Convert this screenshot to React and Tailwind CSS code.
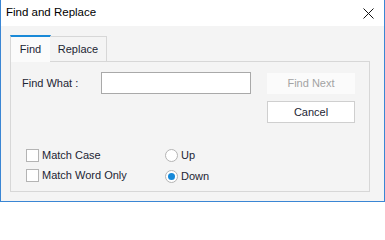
import React from "react";

const font = { fontFamily: '"Liberation Sans", Arial, sans-serif' };

function Checkbox({ label }) {
  return (
    <div className="flex items-center h-[13px]">
      <div className="w-[13px] h-[13px] border border-[#b4b4b4] bg-white shrink-0" />
      <span className="ml-[3px] text-[11px] leading-[13px] text-[#1c2533] whitespace-nowrap">{label}</span>
    </div>
  );
}

function Radio({ label, checked }) {
  return (
    <div className="flex items-center h-[13px]">
      <div className="w-[13px] h-[13px] rounded-full border border-[#b4b4b4] bg-white shrink-0 flex items-center justify-center">
        {checked && <div className="w-[7px] h-[7px] rounded-full bg-[#1689d9]" />}
      </div>
      <span className="ml-[3px] text-[11px] leading-[13px] text-[#1c2533] whitespace-nowrap">{label}</span>
    </div>
  );
}

export default function App() {
  return (
    <div
      className="w-[385px] h-[202px] flex flex-col border-x border-b border-[#3a86d4] bg-[#f4f4f4] overflow-hidden"
      style={font}
    >
      <div className="h-[26px] bg-white flex items-center justify-between pl-[5px] pr-[10px] shrink-0">
        <span className="text-[11.5px] text-black leading-none">Find and Replace</span>
        <svg width="11" height="11" viewBox="0 0 11 11" className="block">
          <path d="M0.5 0.5 L10.5 10.5 M10.5 0.5 L0.5 10.5" stroke="#111" strokeWidth="1" />
        </svg>
      </div>
      <div className="flex-1 pl-[9px] pt-[9px]">
        <div className="flex items-end h-[27px] relative z-10">
          <div className="w-[41px] h-[27px] border-t-2 border-t-[#1a8ad8] border-x border-x-[#d7d7d7] bg-[#fbfbfb] flex items-center justify-center">
            <span className="text-[11px] text-[#1c2533] leading-none pb-[1px]">Find</span>
          </div>
          <div className="w-[57px] h-[25px] border-t border-r border-[#d7d7d7] bg-[#f4f4f4] flex items-center justify-center -ml-[1px] mb-[1px]">
            <span className="text-[11px] text-[#1c2533] leading-none pt-[1px]">Replace</span>
          </div>
        </div>
        <div className="w-[360px] h-[131px] -mt-[1px] border border-[#d7d7d7] bg-[#f4f4f4] pl-[11px] pt-[10px]">
          <div className="flex items-start">
            <div className="w-[79px] h-[22px] flex items-center">
              <span className="text-[11px] text-[#1c2533]">Find What :</span>
            </div>
            <div className="w-[150px] h-[22px] border border-[#a9a9a9] bg-white" />
            <div className="ml-[16px] flex flex-col">
              <div className="mt-[1px] w-[88px] h-[21px] bg-[#fbfbfb] flex items-center justify-center">
                <span className="text-[11px] text-[#a3a3a3]">Find Next</span>
              </div>
              <div className="mt-[7px] w-[88px] h-[22px] bg-white border border-[#cfcfcf] flex items-center justify-center">
                <span className="text-[11px] text-[#1c2533]">Cancel</span>
              </div>
            </div>
          </div>
          <div className="flex mt-[26px] pl-[4px]">
            <div className="w-[139px] flex flex-col gap-[7px]">
              <Checkbox label="Match Case" />
              <Checkbox label="Match Word Only" />
            </div>
            <div className="flex flex-col gap-[8px]">
              <Radio label="Up" />
              <Radio label="Down" checked />
            </div>
          </div>
        </div>
      </div>
    </div>
  );
}
